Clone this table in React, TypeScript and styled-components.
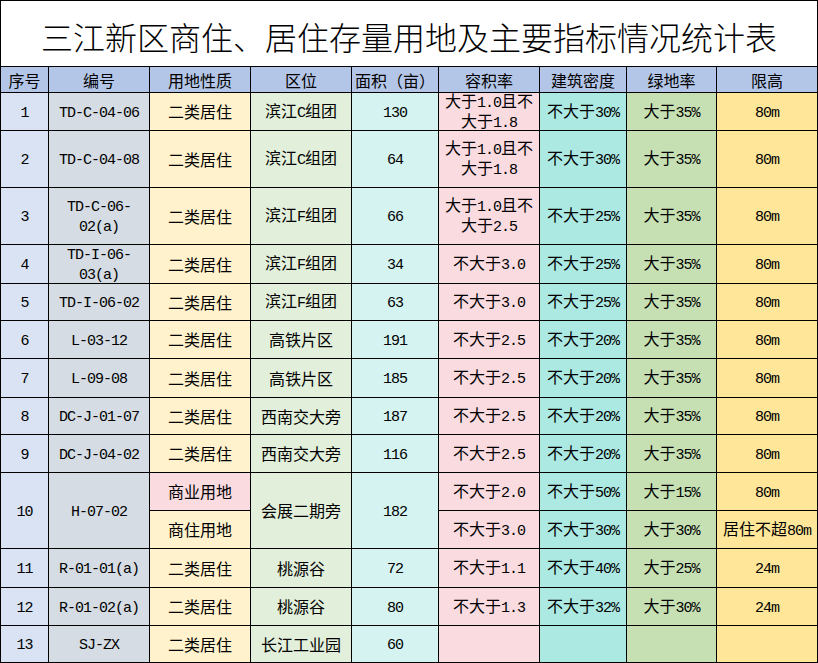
import React from "react";
import styled, { createGlobalStyle } from "styled-components";

const Global = createGlobalStyle`
  html, body { margin: 0; padding: 0; background: #ffffff; }
  body { font-family: "Noto Sans CJK SC", "Noto Sans", sans-serif; color: #000; }
`;

const Table = styled.div`
  box-sizing: border-box;
  width: 818px;
  display: grid;
  grid-template-columns: 47px 100px 100px 100px 86px 100px 86px 89px 100px;
  grid-template-rows: 65px 25px 37px 56px 56px 38px 36px 37px 38px 36px 37px 37px 37px 38px 37px 36px;
  gap: 1px;
  padding: 1px;
  background: #000;
`;

const Title = styled.div`
  grid-column: 1 / -1;
  background: #ffffff;
  display: flex;
  align-items: center;
  justify-content: center;
  padding-top: 4px;
  font-family: "Noto Sans CJK SC", sans-serif;
  font-size: 32px;
  font-weight: 300;
  white-space: nowrap;
`;

const Cell = styled.div<{ $bg: string; $span?: number }>`
  background: ${(p) => p.$bg};
  ${(p) => (p.$span ? `grid-row: span ${p.$span};` : "")}
  display: flex;
  flex-direction: column;
  align-items: center;
  justify-content: center;
  text-align: center;
  overflow: hidden;
  font-family: "Noto Sans CJK SC", sans-serif;
  font-size: 16px;
  line-height: 17px;
  white-space: nowrap;
`;

const Head = styled(Cell)`
  line-height: 20px;
`;

const Latin = styled.span`
  font-family: "Liberation Mono", "DejaVu Sans Mono", monospace;
  font-size: 15px;
  letter-spacing: -1px;
`;

const Line = styled.span`
  display: block;
`;

const C = {
  head: "#b4c6e7",
  no: "#dae3f3",
  code: "#d6dce4",
  use: "#fff2cc",
  pink: "#fadbe0",
  loc: "#e2efda",
  area: "#d5f3f0",
  far: "#fadbe0",
  den: "#ace9e3",
  green: "#c6e0b4",
  h: "#ffe699",
};

function Mixed({ text }: { text: string }) {
  const parts = text.match(/[\x00-\x7f]+|[^\x00-\x7f]+/g) || [];
  return (
    <>
      {parts.map((p, i) =>
        /^[\x00-\x7f]+$/.test(p) ? <Latin key={i}>{p}</Latin> : <React.Fragment key={i}>{p}</React.Fragment>
      )}
    </>
  );
}

function Text({ v }: { v: string | string[] }) {
  const lines = Array.isArray(v) ? v : [v];
  return (
    <>
      {lines.map((l, i) => (
        <Line key={i}>
          <Mixed text={l} />
        </Line>
      ))}
    </>
  );
}

type Sub = { use: string; useBg: string; far: string | string[]; den: string; green: string; h: string };
type Row = { no: string; code: string | string[]; loc: string; area: string; subs: Sub[] };

const std = (far: string | string[], den: string, green: string, h: string): Sub[] => [
  { use: "二类居住", useBg: C.use, far, den, green, h },
];

const rows: Row[] = [
  { no: "1", code: "TD-C-04-06", loc: "滨江C组团", area: "130", subs: std(["大于1.0且不", "大于1.8"], "不大于30%", "大于35%", "80m") },
  { no: "2", code: "TD-C-04-08", loc: "滨江C组团", area: "64", subs: std(["大于1.0且不", "大于1.8"], "不大于30%", "大于35%", "80m") },
  { no: "3", code: ["TD-C-06-", "02(a)"], loc: "滨江F组团", area: "66", subs: std(["大于1.0且不", "大于2.5"], "不大于25%", "大于35%", "80m") },
  { no: "4", code: ["TD-I-06-", "03(a)"], loc: "滨江F组团", area: "34", subs: std("不大于3.0", "不大于25%", "大于35%", "80m") },
  { no: "5", code: "TD-I-06-02", loc: "滨江F组团", area: "63", subs: std("不大于3.0", "不大于25%", "大于35%", "80m") },
  { no: "6", code: "L-03-12", loc: "高铁片区", area: "191", subs: std("不大于2.5", "不大于20%", "大于35%", "80m") },
  { no: "7", code: "L-09-08", loc: "高铁片区", area: "185", subs: std("不大于2.5", "不大于20%", "大于35%", "80m") },
  { no: "8", code: "DC-J-01-07", loc: "西南交大旁", area: "187", subs: std("不大于2.5", "不大于20%", "大于35%", "80m") },
  { no: "9", code: "DC-J-04-02", loc: "西南交大旁", area: "116", subs: std("不大于2.5", "不大于20%", "大于35%", "80m") },
  {
    no: "10",
    code: "H-07-02",
    loc: "会展二期旁",
    area: "182",
    subs: [
      { use: "商业用地", useBg: C.pink, far: "不大于2.0", den: "不大于50%", green: "大于15%", h: "80m" },
      { use: "商住用地", useBg: C.use, far: "不大于3.0", den: "不大于30%", green: "大于30%", h: "居住不超80m" },
    ],
  },
  { no: "11", code: "R-01-01(a)", loc: "桃源谷", area: "72", subs: std("不大于1.1", "不大于40%", "大于25%", "24m") },
  { no: "12", code: "R-01-02(a)", loc: "桃源谷", area: "80", subs: std("不大于1.3", "不大于32%", "大于30%", "24m") },
  { no: "13", code: "SJ-ZX", loc: "长江工业园", area: "60", subs: std("", "", "", "") },
];

const headers = ["序号", "编号", "用地性质", "区位", "面积（亩）", "容积率", "建筑密度", "绿地率", "限高"];

export default function App() {
  return (
    <>
      <Global />
      <Table>
        <Title>三江新区商住、居住存量用地及主要指标情况统计表</Title>
        {headers.map((h) => (
          <Head key={h} $bg={C.head}>
            {h}
          </Head>
        ))}
        {rows.map((r) => {
          const span = r.subs.length > 1 ? r.subs.length : undefined;
          return (
            <React.Fragment key={r.no}>
              {r.subs.map((s, i) => (
                <React.Fragment key={i}>
                  {i === 0 && (
                    <>
                      <Cell $bg={C.no} $span={span}>
                        <Text v={r.no} />
                      </Cell>
                      <Cell $bg={C.code} $span={span}>
                        <Text v={r.code} />
                      </Cell>
                    </>
                  )}
                  <Cell $bg={s.useBg}>
                    <Text v={s.use} />
                  </Cell>
                  {i === 0 && (
                    <>
                      <Cell $bg={C.loc} $span={span}>
                        <Text v={r.loc} />
                      </Cell>
                      <Cell $bg={C.area} $span={span}>
                        <Text v={r.area} />
                      </Cell>
                    </>
                  )}
                  <Cell $bg={C.far}>
                    <Text v={s.far} />
                  </Cell>
                  <Cell $bg={C.den}>
                    <Text v={s.den} />
                  </Cell>
                  <Cell $bg={C.green}>
                    <Text v={s.green} />
                  </Cell>
                  <Cell $bg={C.h}>
                    <Text v={s.h} />
                  </Cell>
                </React.Fragment>
              ))}
            </React.Fragment>
          );
        })}
      </Table>
    </>
  );
}
